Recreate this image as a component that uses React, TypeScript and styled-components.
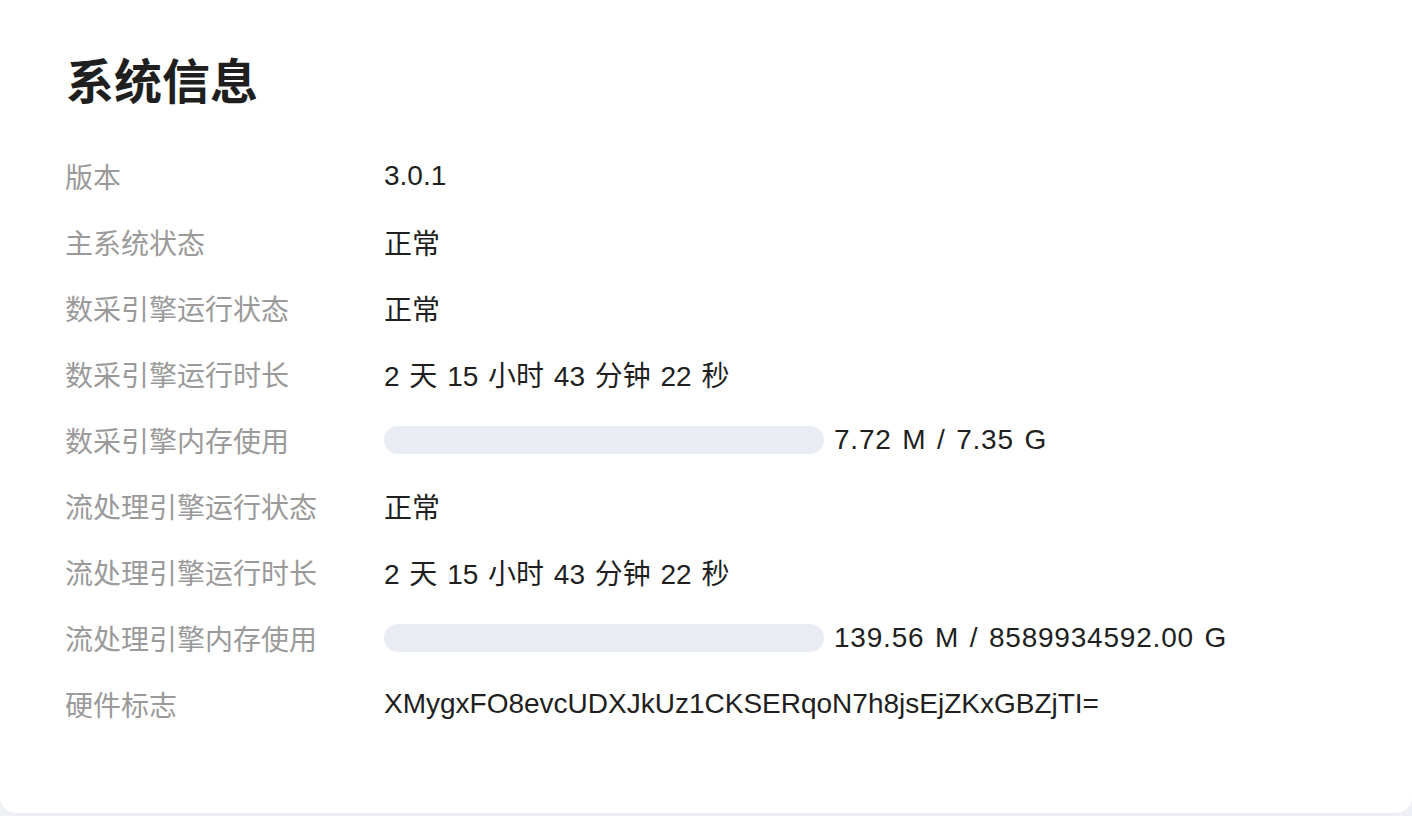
import React from "react";
import styled, { createGlobalStyle } from "styled-components";

const GlobalStyle = createGlobalStyle`
  html, body {
    margin: 0;
    padding: 0;
    background: #eef0f5;
  }
  body {
    font-family: "Liberation Sans", "Noto Sans CJK SC", sans-serif;
  }
`;

type Row = {
  label: string;
  value: string;
  bar?: number;
};

const rows: Row[] = [
  { label: "版本", value: "3.0.1" },
  { label: "主系统状态", value: "正常" },
  { label: "数采引擎运行状态", value: "正常" },
  { label: "数采引擎运行时长", value: "2 天 15 小时 43 分钟 22 秒" },
  { label: "数采引擎内存使用", value: "7.72 M / 7.35 G", bar: 0.1 },
  { label: "流处理引擎运行状态", value: "正常" },
  { label: "流处理引擎运行时长", value: "2 天 15 小时 43 分钟 22 秒" },
  { label: "流处理引擎内存使用", value: "139.56 M / 8589934592.00 G", bar: 0 },
  { label: "硬件标志", value: "XMygxFO8evcUDXJkUz1CKSERqoN7h8jsEjZKxGBZjTI=" },
];

const App: React.FunctionComponent = () => {
  return (
    <>
      <GlobalStyle />
      <Card>
        <Title>系统信息</Title>
        <InfoList>
          {rows.map((row) => (
            <InfoRow key={row.label}>
              <Label>{row.label}</Label>
              <Value>
                {row.bar !== undefined && (
                  <Track>
                    <Fill style={{ width: `${row.bar * 100}%` }} />
                  </Track>
                )}
                <ValueText $memory={row.bar !== undefined}>{row.value}</ValueText>
              </Value>
            </InfoRow>
          ))}
        </InfoList>
      </Card>
    </>
  );
};
export default App;

const Card = styled.div`
  box-sizing: border-box;
  height: 813px;
  background: #ffffff;
  border-radius: 0 0 16px 16px;
  padding: 48px 66px 0 65px;
`;

const Title = styled.h1`
  margin: 0 0 0 1px;
  font-size: 48px;
  line-height: 70px;
  font-weight: 700;
  color: #1f1f1f;
`;

const InfoList = styled.div`
  display: flex;
  flex-direction: column;
  margin-top: 25px;
`;

const InfoRow = styled.div`
  display: grid;
  grid-template-columns: 319px 1fr;
  align-items: center;
  height: 66px;
  font-size: 28px;
`;

const Label = styled.div`
  color: #9a9a9a;
  white-space: nowrap;
`;

const Value = styled.div`
  display: flex;
  align-items: center;
  gap: 10px;
  color: #1f1f1f;
  white-space: nowrap;
`;

const ValueText = styled.span<{ $memory?: boolean }>`
  word-spacing: 2px;
  letter-spacing: ${(p) => (p.$memory ? "0.8px" : "0")};
`;

const Track = styled.div`
  width: 440px;
  height: 28px;
  border-radius: 14px;
  background: #e9ecf3;
  overflow: hidden;
`;

const Fill = styled.div`
  height: 100%;
  background: #e9ecf3;
`;
